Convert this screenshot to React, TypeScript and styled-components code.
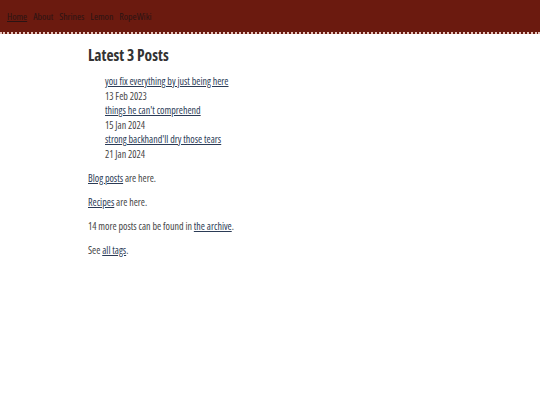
import React from "react";
import styled, { createGlobalStyle } from "styled-components";

const Global = createGlobalStyle`
  html, body { margin: 0; padding: 0; background: #ffffff; }
  body {
    font-family: "Open Sans", "DejaVu Sans", sans-serif;
    font-stretch: 75%;
    font-size: 10px;
    color: #444444;
  }
`;

const Header = styled.header`
  background: #6b1a0f;
  height: 32px;
  border-bottom: 2px dotted #e8c4bc;
  display: flex;
  align-items: center;
  padding: 0 7px;
`;

const Nav = styled.nav`
  display: flex;
  gap: 6px;
  font-size: 9.8px;
`;

const NavLink = styled.a<{ $active?: boolean }>`
  color: #2a1414;
  text-decoration: ${(p) => (p.$active ? "underline" : "none")};
`;

const Main = styled.main`
  padding: 12px 0 0 88px;
  line-height: 14.5px;
`;

const Heading = styled.h1`
  margin: 0 0 10px;
  font-size: 15.5px;
  line-height: 18px;
  font-weight: bold;
  color: #333333;
`;

const PostList = styled.ul`
  list-style: none;
  margin: 0 0 10px;
  padding: 0 0 0 17px;
`;

const PostItem = styled.li`
  display: flex;
  flex-direction: column;
`;

const Link = styled.a`
  color: #2b3b56;
  text-decoration: underline;
`;

const Para = styled.p`
  margin: 0 0 9.5px;
`;

const posts = [
  { title: "you fix everything by just being here", date: "13 Feb 2023" },
  { title: "things he can't comprehend", date: "15 Jan 2024" },
  { title: "strong backhand'll dry those tears", date: "21 Jan 2024" },
];

export default function App() {
  return (
    <>
      <Global />
      <Header>
        <Nav>
          <NavLink href="#" $active>Home</NavLink>
          <NavLink href="#">About</NavLink>
          <NavLink href="#">Shrines</NavLink>
          <NavLink href="#">Lemon</NavLink>
          <NavLink href="#">RopeWiki</NavLink>
        </Nav>
      </Header>
      <Main>
        <Heading>Latest 3 Posts</Heading>
        <PostList>
          {posts.map((p) => (
            <PostItem key={p.title}>
              <span><Link href="#">{p.title}</Link></span>
              <span>{p.date}</span>
            </PostItem>
          ))}
        </PostList>
        <Para><Link href="#">Blog posts</Link> are here.</Para>
        <Para><Link href="#">Recipes</Link> are here.</Para>
        <Para>14 more posts can be found in <Link href="#">the archive</Link>.</Para>
        <Para>See <Link href="#">all tags</Link>.</Para>
      </Main>
    </>
  );
}
